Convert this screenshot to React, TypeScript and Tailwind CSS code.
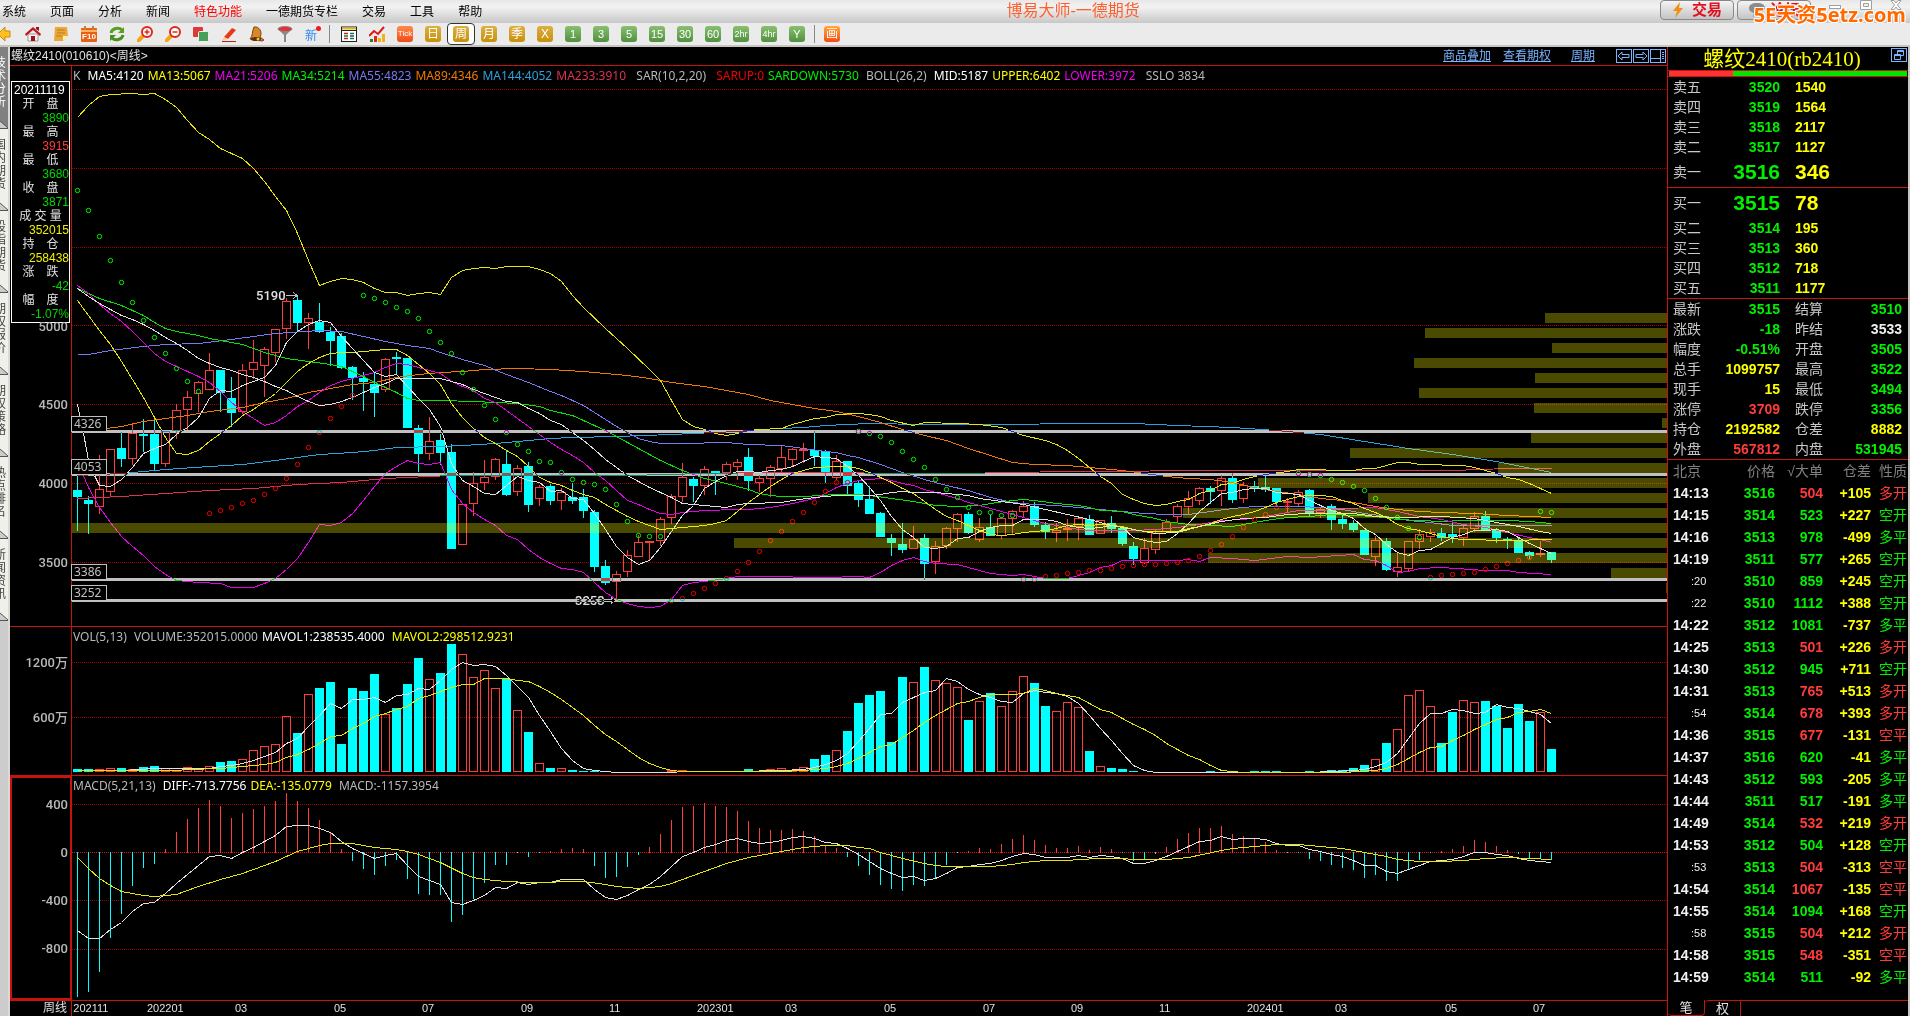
import type { ReactNode } from 'react';

type Candle = [high: number, top: number, bottom: number, low: number, up: 0 | 1];

// Weekly candles, in chart units
const candles: Candle[] = [
  [473, 490, 497, 531, 0], [496, 500, 504, 534, 0], [455, 489, 507, 514, 1], [449, 449, 492, 497, 1], [432, 448, 459, 467, 0],
  [424, 433, 459, 465, 1], [419, 434, 436, 452, 0], [418, 434, 464, 470, 0], [431, 431, 464, 467, 1], [404, 410, 431, 439, 1],
  [391, 397, 410, 430, 1], [381, 382, 394, 412, 1], [353, 370, 390, 390, 1], [370, 370, 393, 412, 0], [377, 398, 413, 427, 0],
  [364, 370, 412, 414, 1], [340, 362, 370, 379, 1], [347, 349, 366, 397, 1], [329, 329, 353, 362, 1], [298, 301, 329, 339, 1],
  [295, 300, 323, 331, 0], [313, 318, 323, 349, 1], [303, 322, 332, 333, 0], [327, 332, 341, 366, 0], [333, 336, 368, 369, 0],
  [366, 367, 378, 400, 0], [372, 378, 382, 411, 0], [372, 384, 393, 417, 0], [358, 359, 390, 392, 1], [352, 357, 359, 374, 0],
  [358, 358, 428, 428, 0], [425, 428, 454, 472, 0], [417, 441, 454, 460, 1], [434, 440, 453, 465, 0], [444, 452, 549, 549, 0],
  [504, 504, 545, 545, 1], [472, 483, 504, 516, 1], [460, 477, 483, 490, 1], [458, 459, 477, 480, 1], [450, 464, 495, 496, 0],
  [465, 468, 492, 496, 1], [462, 466, 505, 512, 0], [485, 487, 499, 506, 1], [484, 486, 501, 505, 0], [488, 492, 501, 510, 1],
  [483, 497, 501, 504, 0], [489, 497, 511, 518, 0], [510, 512, 567, 572, 0], [560, 566, 583, 585, 0], [571, 574, 582, 600, 1],
  [550, 555, 572, 577, 1], [535, 542, 557, 557, 1], [541, 541, 543, 560, 1], [517, 519, 541, 546, 1], [494, 496, 518, 524, 1],
  [463, 477, 497, 502, 1], [477, 479, 486, 502, 0], [466, 469, 486, 495, 1], [471, 471, 474, 495, 0], [462, 464, 473, 480, 1],
  [459, 462, 467, 480, 1], [448, 457, 481, 491, 0], [475, 478, 483, 492, 1], [465, 467, 479, 497, 1], [445, 457, 469, 473, 1],
  [448, 449, 460, 466, 1], [443, 449, 451, 463, 1], [431, 450, 456, 466, 0], [450, 451, 473, 483, 0], [455, 461, 478, 480, 1],
  [461, 461, 486, 495, 0], [480, 483, 500, 507, 0], [486, 499, 514, 514, 0], [512, 513, 537, 537, 0], [534, 538, 543, 556, 0],
  [523, 544, 550, 553, 0], [526, 539, 549, 549, 1], [534, 538, 564, 580, 0], [541, 546, 562, 574, 1], [527, 528, 546, 549, 1],
  [513, 514, 529, 542, 1], [512, 514, 533, 534, 0], [518, 527, 540, 542, 1], [515, 527, 536, 536, 0], [517, 518, 536, 539, 1],
  [510, 511, 519, 534, 1], [501, 506, 512, 517, 1], [502, 506, 525, 527, 0], [522, 525, 532, 539, 0], [523, 530, 533, 542, 1],
  [519, 528, 530, 541, 1], [517, 518, 527, 540, 1], [515, 519, 535, 535, 0], [520, 520, 534, 534, 1], [516, 523, 529, 533, 0],
  [528, 528, 544, 546, 0], [542, 546, 559, 565, 0], [538, 548, 563, 564, 1], [530, 533, 550, 554, 1], [519, 522, 532, 532, 1],
  [504, 506, 517, 522, 1], [491, 498, 507, 515, 1], [487, 488, 501, 505, 1], [486, 488, 492, 504, 0], [475, 478, 491, 506, 1],
  [473, 478, 500, 503, 0], [482, 485, 499, 503, 1], [481, 486, 488, 492, 0], [476, 487, 490, 492, 0], [488, 488, 502, 507, 0],
  [498, 501, 502, 513, 1], [490, 492, 504, 507, 1], [489, 490, 513, 517, 0], [508, 509, 513, 518, 1], [504, 506, 520, 530, 0],
  [515, 519, 524, 529, 0], [520, 523, 530, 532, 0], [530, 530, 555, 555, 0], [536, 540, 557, 566, 1], [538, 541, 570, 571, 0],
  [553, 567, 572, 577, 1], [541, 541, 569, 572, 1], [529, 534, 542, 549, 1], [529, 532, 537, 542, 1], [528, 533, 538, 541, 0],
  [522, 534, 537, 543, 0], [526, 528, 538, 546, 1], [512, 516, 529, 532, 1], [511, 516, 530, 530, 0], [528, 530, 538, 543, 0],
  [537, 539, 540, 549, 0], [537, 541, 553, 553, 0], [551, 552, 556, 559, 0], [541, 553, 555, 557, 1], [552, 552, 560, 563, 0],
];

const volumeTops = [
  769, 769, 769, 768, 768, 769, 767, 766, 768, 770, 767, 769, 766, 762, 761, 759, 750, 746, 744, 716, 733, 694, 688, 682, 744,
  688, 691, 674, 714, 708, 684, 658, 679, 673, 644, 654, 677, 670, 688, 679, 710, 732, 763, 768, 768, 770, 771, 771, 771, 771,
  771, 771, 771, 771, 770, 770, 771, 771, 771, 771, 771, 769, 771, 769, 768, 770, 767, 759, 755, 750, 731, 703, 695, 691, 742,
  677, 682, 667, 680, 683, 687, 720, 701, 693, 706, 691, 676, 683, 706, 711, 702, 707, 751, 766, 768, 769, 771, 771, 771, 771,
  771, 771, 771, 771, 771, 771, 771, 771, 771, 771, 771, 771, 771, 771, 770, 770, 768, 765, 759, 743, 729, 695, 690, 706, 743,
  712, 700, 702, 701, 706, 728, 704, 721, 712, 749,
];

const macdEnds = [
  997, 992, 972, 938, 914, 886, 868, 864, 849, 832, 819, 808, 800, 806, 818, 813, 809, 806, 801, 793, 801, 808, 820, 832, 849,
  861, 869, 875, 866, 860, 879, 894, 895, 895, 922, 915, 899, 883, 865, 865, 853, 857, 853, 851, 849, 848, 849, 866, 878, 877,
  867, 855, 847, 834, 820, 807, 806, 803, 806, 807, 811, 821, 828, 830, 830, 829, 831, 836, 846, 848, 857, 866, 875, 885, 889,
  891, 885, 886, 878, 865, 853, 851, 848, 849, 844, 839, 835, 840, 845, 848, 848, 846, 850, 847, 849, 853, 861, 859, 854, 847,
  839, 833, 828, 828, 826, 834, 836, 839, 842, 850, 853, 853, 859, 861, 865, 868, 870, 878, 875, 881, 881, 870, 860, 853, 851,
  849, 846, 840, 842, 846, 850, 854, 858, 858, 860,
];

// Series are written as "bar:y" pairs
const priceLines = [
  { color: '#dc3250', d: '0:498 4:496 8:493 12:490 16:488 20:484 24:482 28:478 32:476 34:475 50:475 57:473 63:472 80:473 90:471 105:470 125:470 130:468 134:468' },
  { color: '#2da0dc', d: '0:475 4:473 8:469 12:466 15:464 18:460 20:457 22:454 25:452 27:450 29:447 33:446 35:445 38:443 40:441 43:438 45:437 49:436 54:434 58:432 60:431 62:429 66:427 68:425 72:423 77:424 85:424 90:423 96:423 100:425 105:427 109:430 113:434 117:441 121:448 125:454 129:461 134:472' },
  { color: '#f07800', d: '0:431 2:429 4:426 6:421 8:418 10:415 12:411 15:407 17:402 19:398 21:392 23:388 25:384 27:382 29:377 31:374 33:372 35:371 37:369 40:368 43:369 46:371 50:375 52:378 54:382 57:386 59:390 61:394 63:400 65:404 67:408 69:411 71:416 73:422 75:429 77:435 79:440 81:448 83:455 85:462 87:464 90:465 93:468 95:470 97:473 99:476 101:478 103:479 105:482 107:487 109:491 111:494 113:498 115:500 118:506 120:509 122:511 124:512 127:513 130:515 134:517' },
  { color: '#7878f0', d: '0:354 1:354 3:350 6:346 8:344 11:343 14:339 18:333 22:330 24:331 26:336 28:341 30:345 32:348 33:352 35:359 37:365 39:374 41:382 43:391 44:395 45:400 46:405 47:412 48:419 49:426 50:432 51:438 52:441 53:443 55:443 59:442 61:444 64:445 66:448 68:451 69:452 70:455 71:457 73:464 75:472 77:479 79:485 81:490 83:497 85:502 87:504 89:505 91:507 93:509 95:511 97:513 99:514 101:514 103:511 105:508 107:506 109:506 111:506 113:507 115:509 117:513 119:516 121:520 123:522 125:525 134:525' },
  { color: '#00e600', d: '0:288 1:293 2:298 4:305 6:315 7:322 8:328 9:331 11:335 12:338 15:344 17:352 19:358 21:361 23:364 24:366 25:371 26:376 27:382 28:387 29:392 30:398 31:400 33:400 36:401 38:402 40:403 42:406 43:410 45:415 46:420 48:430 50:442 52:454 53:460 55:470 57:478 59:483 60:486 61:489 62:493 63:495 64:496 66:496 69:494 71:494 72:495 74:498 76:501 78:505 80:506 82:505 83:503 85:500 86:499 87:500 89:503 91:505 92:507 93:510 95:511 96:514 98:518 99:521 101:524 103:525 105:526 106:524 108:520 110:517 112:516 114:514 116:515 118:516 120:519 122:520 124:521 126:520 130:520 132:521 134:523' },
  { color: '#e600e6', d: '0:285 1:293 2:304 3:313 4:321 5:331 6:342 7:353 8:361 9:366 10:371 11:376 12:382 13:391 14:402 15:411 16:418 17:425 18:422 19:415 20:406 21:400 22:392 23:385 24:381 25:378 26:375 27:372 28:367 29:363 30:364 31:367 32:370 33:373 34:381 35:386 36:390 37:398 38:402 39:410 40:418 41:426 42:434 43:442 44:449 45:455 46:462 47:472 48:480 49:490 50:500 51:504 52:509 53:513 54:514 55:512 56:511 57:510 60:509 61:509 62:508 63:507 65:503 67:498 68:493 69:487 70:483 71:480 72:479 73:478 74:480 75:483 76:485 77:489 78:492 79:495 80:498 81:502 82:505 83:508 84:511 85:514 86:517 87:520 88:523 89:525 90:527 91:529 92:530 96:530 98:529 100:527 102:524 104:520 106:519 108:516 110:512 111:510 113:510 115:508 118:507 119:509 120:511 122:516 124:519 126:524 128:527 130:532 132:537 133:539 134:542' },
  { color: '#e6e600', d: '0:300 1:315 2:330 3:344 4:361 5:379 6:397 7:417 8:437 9:453 10:454 11:450 12:441 13:433 14:425 15:415 16:409 17:401 18:393 19:382 20:371 21:363 22:357 23:353 24:352 25:352 26:351 27:350 28:349 29:349 30:355 31:364 32:373 33:384 34:403 35:417 36:428 37:437 38:443 39:450 40:456 41:466 42:477 43:482 44:485 45:490 46:494 47:497 48:504 49:510 50:516 51:521 52:525 53:529 54:528 55:527 56:526 57:525 58:523 59:520 60:511 61:502 62:494 63:486 64:479 65:473 66:470 67:467 69:466 70:466 71:468 72:472 73:477 74:482 75:488 76:493 77:501 78:509 79:516 80:520 81:525 82:530 83:534 84:535 85:534 86:532 87:531 88:530 89:528 90:525 91:524 92:525 93:524 94:525 95:526 96:529 97:531 100:531 101:528 102:526 103:523 104:519 105:516 106:514 107:511 108:507 109:502 110:499 111:496 112:495 113:495 114:496 115:500 116:503 117:508 118:512 119:517 120:524 121:528 122:530 123:533 124:536 125:538 126:539 127:539 129:540 131:540 133:539 134:539' },
  { color: '#e0e0e0', d: '0:404 0.5:430 1:460 1.5:474 2:485 3:486 4:479 5:467 6:453 7:448 8:444 9:434 10:427 11:417 12:398 13:390 14:391 15:385 16:381 17:377 18:365 19:342 20:331 21:324 22:320 23:322 24:336 25:348 26:360 27:372 28:376 29:374 30:386 31:398 32:409 33:426 34:463 35:480 36:486 37:493 38:494 39:485 40:476 41:480 42:482 43:491 44:490 45:498 46:499 47:513 48:529 49:546 50:557 51:564 52:560 53:547 54:531 55:515 56:505 57:488 58:481 59:475 60:471 61:471 62:472 63:470 64:469 65:466 66:461 67:456 68:457 69:458 70:466 71:475 72:487 73:500 74:516 75:529 76:537 77:547 78:548 79:546 80:538 81:537 82:531 83:527 84:525 85:525 86:519 87:519 88:519 89:521 90:525 91:527 92:528 93:527 94:525 95:527 96:537 97:540 98:542 99:541 100:533 101:523 102:511 103:502 104:493 105:492 106:489 107:488 108:488 109:492 110:493 111:494 112:500 113:505 114:510 115:513 116:518 117:528 118:534 119:544 120:552 121:555 122:550 123:549 124:543 125:537 126:534 127:530 128:530 129:529 130:531 131:537 132:543 133:548 134:553' },
  { color: '#e0e0e0', d: '0:288 1:296 2:303 3:309 4:315 5:319 6:324 7:330 8:337 9:343 10:350 11:358 12:363 13:367 14:370 15:374 16:377 17:381 18:386 19:390 20:396 21:401 22:405 23:404 24:401 25:397 26:392 27:387 28:383 29:378 33:378 34:381 35:384 36:389 37:393 38:397 39:401 40:402 41:408 42:413 43:420 44:424 45:432 46:440 47:449 48:459 49:467 50:475 51:481 52:487 53:492 54:497 55:503 56:504 57:505 59:507 60:504 61:503 64:502 65:500 67:497 68:496 69:495 72:495 73:494 74:492 75:491 76:492 78:492 80:494 81:495 82:498 84:501 86:504 88:509 90:514 92:519 93:522 94:525 95:527 97:531 98:533 100:532 102:526 104:521 106:518 108:517 110:514 112:513 116:513 118:516 120:517 124:516 127:518 129:522 131:526 133:531 134:533' },
  { color: '#e6e600', d: '0:117 1:105 2:96 3:94 5:93 6:94 7:93 8:99 9:107 10:120 11:132 12:139 13:148 14:153 15:158 16:168 17:181 18:196 19:210 20:233 21:260 22:285 23:281 24:278 25:279 26:282 27:288 28:292 29:292 30:295 31:293 32:292 33:294 34:277 35:270 36:268 37:267 38:268 39:266 41:266 42:269 43:273 44:281 45:295 46:307 48:328 50:348 52:369 53:380 54:400 55:419 56:426 57:429 58:433 59:435 60:433 61:430 62:429 64:428 65:424 67:418 68:417 69:414 71:413 72:414 73:416 74:420 76:425 77:422 80:423 82:424 84:427 86:435 88:440 89:444 90:450 91:458 92:467 93:476 94:483 95:494 96:499 97:503 98:505 99:504 100:501 101:499 102:493 103:490 104:484 105:483 106:479 107:476 108:474 110:471 111:469 116:470 117:468 118:468 119:465 120:462 121:462 122:464 126:465 127:467 128:470 129:473 130:477 131:479 132:483 133:488 134:493' },
  { color: '#e600e6', d: '0.5:474 1:487 2:507 3:522 4:536 5:546 6:555 7:566 8:574 9:580 10:581 11:582 13:583 14:587 16:587 17:583 18:578 19:569 20:558 21:542 22:524 23:525 24:522 25:513 26:500 27:486 28:473 29:466 30:460 31:463 32:464 33:462 34:489 35:503 36:512 37:519 38:525 39:535 40:539 41:549 42:557 43:563 44:568 45:569 46:572 47:582 48:592 49:599 50:603 51:606 52:607 53:606 54:599 55:585 56:582 57:581 59:578 60:576 64:576 66:577 68:577 71:576 72:577 73:572 74:565 75:560 76:557 77:561 78:563 80:564 81:567 83:573 85:575 86:574 88:578 90:578 91:575 92:572 93:567 94:565 95:560 100:560 101:559 102:561 103:557 105:558 107:560 110:556 112:557 116:554 117:559 118:560 119:565 120:572 121:571 122:568 124:567 128:570 130:570 131:572 134:574' },
];

const sarDown = '0:190 1:210 2:236 3:260 4:282 5:302 6:320 7:337 8:353 9:368 10:381 11:391 26:295 27:298 28:302 29:307 30:311 31:318 32:331 33:342 34:353 35:372 36:389 37:405 38:419 39:432 40:444 41:451 42:461 43:462 44:472 45:479 46:482 47:484 48:489 49:504 50:521 51:535 52:536 53:536 71:431 72:433 73:436 74:442 75:451 76:459 77:467 78:479 79:489 80:497 81:507 82:512 83:512 84:515 85:515 111:473 112:474 113:475 114:479 115:482 116:486 117:490 118:498 119:507 120:517 121:528 122:537 133:511 134:512';
const sarUp = '12:513 13:510 14:507 15:503 16:500 17:494 18:488 19:478 20:464 21:447 22:432 23:418 24:406 25:395 54:600 55:598 56:593 57:588 58:583 59:578 60:571 61:562 62:551 63:540 64:531 65:521 66:512 67:502 68:491 69:482 70:482 86:579 87:579 88:576 89:575 90:573 91:572 92:570 93:570 94:568 95:566 96:565 97:564 98:564 99:563 100:562 101:560 102:556 103:550 104:544 105:536 106:527 107:519 108:514 109:507 110:506 123:577 124:575 125:574 126:573 127:572 128:569 129:566 130:563 131:560 132:557';

const mavol1 = '0:770 4:770 7:768 12:768 13:766 14:765 15:763 16:760 17:756 18:752 19:743 20:738 21:726 22:715 23:703 24:708 25:699 26:699 27:697 28:702 29:695 30:694 31:688 32:689 33:680 34:669 35:662 36:665 37:664 38:666 39:675 40:686 41:697 42:715 43:731 44:748 45:760 46:768 47:770 49:772 60:771 64:770 66:769 67:767 68:764 69:760 70:753 71:741 72:728 73:714 74:713 75:702 76:697 77:692 78:690 79:678 80:681 81:689 82:694 83:697 84:701 85:702 86:693 87:690 88:692 89:693 90:696 91:703 92:715 93:728 94:740 95:753 96:765 97:770 98:772 112:772 114:771 116:770 117:769 118:766 119:762 120:753 121:738 122:723 123:713 124:713 125:709 126:710 127:713 128:712 129:704 130:707 131:708 132:711 133:714 134:723';
const mavol2 = '0:770 8:770 11:769 12:768 13:768 14:767 15:766 16:765 17:764 18:762 19:757 20:754 21:749 22:743 23:736 24:735 25:728 26:723 27:716 28:713 29:709 30:706 31:698 32:695 33:691 34:687 35:684 36:684 37:678 39:678 40:680 41:681 42:686 43:692 44:699 45:707 46:715 47:725 48:734 49:741 50:749 51:757 52:763 53:767 54:770 55:771 64:771 66:770 67:769 68:768 69:766 70:763 71:758 72:752 73:746 74:744 75:737 76:730 77:722 78:715 79:709 80:703 81:701 82:697 83:694 85:694 86:693 87:688 88:690 89:693 90:695 91:697 92:703 93:709 94:712 95:718 96:724 97:729 98:735 99:743 100:749 101:755 102:759 103:765 104:770 106:772 115:772 118:770 119:768 120:764 121:758 122:752 123:747 124:746 125:740 126:735 127:729 128:724 129:719 130:717 131:712 132:711 133:709 134:713';
const diff = '0:930 1:938 2:938 3:929 4:922 5:911 6:903 7:902 8:893 9:883 10:874 11:865 12:856 13:855 14:858 15:852 16:847 17:841 18:835 19:826 20:825 21:825 22:828 23:832 24:841 25:848 26:853 27:858 28:855 29:853 30:865 31:876 32:880 33:884 34:902 35:904 36:900 37:895 38:887 39:888 40:882 41:884 42:882 43:882 44:879 46:879 47:889 48:897 49:899 50:895 51:889 52:884 53:876 54:866 55:856 56:852 57:847 58:844 59:840 60:838 61:841 62:843 63:842 64:840 65:837 66:836 67:838 68:842 69:843 70:848 71:854 72:861 73:868 74:873 75:877 76:876 77:880 78:878 79:873 80:867 81:866 82:864 83:863 84:860 85:856 86:853 87:854 88:857 90:857 91:855 92:857 93:855 94:856 95:858 96:863 97:863 98:860 99:856 100:851 101:846 102:841 103:840 104:836 105:839 106:838 107:838 108:839 109:843 110:845 111:845 112:849 113:851 114:854 115:856 116:860 117:865 118:865 119:871 120:873 121:869 122:865 123:861 124:860 125:859 126:856 127:852 128:852 129:854 130:855 131:858 132:860 133:861 134:862';
const dea = '0:857 1:868 2:878 3:885 4:891 5:893 6:895 7:896 8:895 9:894 10:890 11:886 13:879 15:873 18:861 20:851 22:845 23:843 25:843 27:847 29:849 30:851 31:854 33:862 35:873 36:877 37:879 39:881 41:882 43:882 44:881 46:881 48:884 49:886 51:888 52:887 53:886 54:883 56:875 58:867 59:863 61:857 63:853 65:849 66:847 68:845 70:845 71:847 72:848 73:852 75:858 77:863 78:865 79:866 83:866 85:864 86:862 88:860 90:860 91:859 93:858 95:858 96:859 99:859 101:857 104:850 105:848 107:846 109:844 111:844 113:846 115:848 116:850 118:854 119:856 120:859 122:861 124:861 126:860 128:858 130:857 132:858 134:859';

// Volume profile: left edge of each price bucket
const profile = [1545, 1425, 1552, 1414, 1535, 1419, 1534, 1662, 1531, 1350, 1498, 1258, 1368, 1183, 72, 734, 1208, 1611, 1666];

const levels = [
  { price: 4326, y: 431 },
  { price: 4053, y: 474 },
  { price: 3386, y: 579 },
  { price: 3252, y: 600 },
];

const LEFT = 72;
const WIDTH = 1595;
const barX = (i: number) => 77 + 11 * i;
const parse = (s: string) => s.split(' ').map(p => p.split(':').map(Number));
const toPoints = (s: string) => parse(s).map(([i, y]) => `${barX(i) + 0.5},${y + 0.5}`).join(' ');

function Line({ d, color }: { d: string; color: string }) {
  return <polyline points={toPoints(d)} fill="none" stroke={color} strokeWidth={1} />;
}

function Dots({ d, color }: { d: string; color: string }) {
  return (
    <g fill="none" stroke={color} shapeRendering="auto">
      {parse(d).map(([i, y]) => (
        <circle key={i} cx={barX(i) + 0.5} cy={y + 0.5} r={2.2} />
      ))}
    </g>
  );
}

function GridLines({ ys }: { ys: number[] }) {
  return (
    <g stroke="#a00000" strokeDasharray="1 1">
      {ys.map(y => (
        <line key={y} x1={LEFT} x2={LEFT + WIDTH} y1={y + 0.5} y2={y + 0.5} />
      ))}
    </g>
  );
}

interface PanelProps {
  top: number;
  height: number;
  ticks: { label: string; y: number }[];
  legend: [text: string, color: string][];
  grid: number[];
  selected?: boolean;
  axisExtra?: ReactNode;
  overlay?: ReactNode;
  children: ReactNode;
}

function Panel({ top, height, ticks, legend, grid, selected, axisExtra, overlay, children }: PanelProps) {
  return (
    <section className="grid min-h-0 grid-cols-[62px_1fr] border-b border-[#c4140c]">
      <div className={`relative ${selected ? 'border-2 border-[#c4140c]' : 'border-r border-[#c4140c]'}`}>
        {axisExtra}
        {ticks.map(t => (
          <span
            key={t.label}
            className={`absolute -translate-y-1/2 font-['Roboto','Noto_Sans_CJK_SC',sans-serif] text-[13px] leading-3 font-medium text-[#b8b8b8] ${selected ? 'right-[2px]' : 'right-[3px]'}`}
            style={{ top: `${((t.y - top) / height) * 100}%` }}
          >
            {t.label}
          </span>
        ))}
      </div>
      <div className="relative min-h-0">
        <svg
          className="absolute inset-0 size-full"
          viewBox={`${LEFT} ${top} ${WIDTH} ${height}`}
          preserveAspectRatio="none"
          shapeRendering="crispEdges"
        >
          <GridLines ys={grid} />
          {children}
        </svg>
        {overlay}
        <p className="relative flex gap-1 pt-[2px] pl-px font-['Noto_Sans',sans-serif] text-[12px] leading-4 whitespace-pre">
          {legend.map(([text, color]) => (
            <span key={text} style={{ color }}>{text}</span>
          ))}
        </p>
      </div>
    </section>
  );
}

const quoteInfo = [
  ['开　盘', '3890', 'text-[#00d800]'],
  ['最　高', '3915', 'text-[#ff3c3c]'],
  ['最　低', '3680', 'text-[#00d800]'],
  ['收　盘', '3871', 'text-[#00d800]'],
  ['成 交 量', '352015', 'text-[#f0f000]'],
  ['持　仓', '258438', 'text-[#f0f000]'],
  ['涨　跌', '-42', 'text-[#00d800]'],
  ['幅　度', '-1.07%', 'text-[#00d800]'],
];

function CursorInfo() {
  return (
    <dl className="absolute top-[15px] right-px left-px border border-white bg-black pb-px text-[12px] leading-[14px]">
      <dt className="pt-px pl-[2px] text-white">20211119</dt>
      {quoteInfo.map(([label, value, color]) => (
        <div key={label}>
          <dd className="text-center text-[#e0e0e0]">{label}</dd>
          <dd className={`text-right ${color}`}>{value}</dd>
        </div>
      ))}
    </dl>
  );
}

function PricePanel() {
  return (
    <Panel
      top={66}
      height={560}
      grid={[89, 168, 247, 325, 404, 483, 562]}
      ticks={[
        { label: '5000', y: 327 },
        { label: '4500', y: 405 },
        { label: '4000', y: 484 },
        { label: '3500', y: 563 },
      ]}
      legend={[
        ['K ', '#b8b8b8'], ['MA5:4120', '#ffffff'], ['MA13:5067', '#ffff00'], ['MA21:5206', '#f000f0'], ['MA34:5214', '#00f000'],
        ['MA55:4823', '#7878f0'], ['MA89:4346', '#f07800'], ['MA144:4052', '#2da0dc'], ['MA233:3910', '#dc3250'],
        ['  SAR(10,2,20)  ', '#b8b8b8'], ['SARUP:0', '#f00000'], ['SARDOWN:5730', '#00f000'], [' BOLL(26,2) ', '#b8b8b8'],
        ['MID:5187', '#ffffff'], ['UPPER:6402', '#ffff00'], ['LOWER:3972', '#f000f0'], ['  SSLO 3834', '#b8b8b8'],
      ]}
      axisExtra={<CursorInfo />}
      overlay={levels.map(l => (
        <span
          key={l.price}
          className="absolute -left-px w-9 -translate-y-full border border-[#c0c0c0] bg-black pl-[2px] font-['Noto_Sans',sans-serif] text-[12px] leading-[14px] text-[#c0c0c0]"
          style={{ top: `${((l.y - 65) / 560) * 100}%` }}
        >
          {l.price}
        </span>
      ))}
    >
      {candles.map(([high, top, bottom, low, up], i) => {
        const x = barX(i);
        return up ? (
          <g key={i} stroke="#ff3c3c" fill="none">
            <path d={`M${x + 0.5} ${high}V${top}M${x + 0.5} ${bottom}V${low}`} />
            <rect x={x - 3.5} y={top + 0.5} width={8} height={Math.max(bottom - top - 1, 1)} />
          </g>
        ) : (
          <g key={i} fill="#00ffff">
            <rect x={x} y={high} width={1} height={low - high} />
            <rect x={x - 4} y={top} width={9} height={bottom - top} />
          </g>
        );
      })}
      {priceLines.map((l, i) => <Line key={i} {...l} />)}
      <Dots d={sarDown} color="#00f000" />
      <Dots d={sarUp} color="#f00000" />
      <g stroke="#c0c0c0" fill="none">
        <path d="M286 295.5H297M293.5 292.5L297 295.5L293.5 298.5M604 600.5H614M611 597.5L614 600.5L611 603.5" />
      </g>
      <g fill="#e0e0e0" fontFamily="Roboto, sans-serif" fontSize="13" fontWeight="500">
        <text x="256" y="300">5190</text>
        <text x="575" y="605">3253</text>
      </g>
      <g fill="#ffff00" opacity={0.29}>
        {profile.map((x, i) => (
          <rect key={i} x={x} y={313 + i * 15} width={LEFT + WIDTH - x} height={10} />
        ))}
      </g>
      <g fill="#c0c0c0" className="mix-blend-difference">
        {levels.map(l => (
          <rect key={l.price} x={LEFT} y={l.y - 1} width={WIDTH} height={3} />
        ))}
      </g>
    </Panel>
  );
}

function VolumePanel() {
  return (
    <Panel
      top={627}
      height={148}
      grid={[662, 717]}
      ticks={[
        { label: '1200万', y: 663 },
        { label: '600万', y: 718 },
      ]}
      legend={[
        ['VOL(5,13) ', '#b8b8b8'], ['VOLUME:352015.0000', '#b8b8b8'], ['MAVOL1:238535.4000 ', '#ffffff'], ['MAVOL2:298512.9231', '#ffff00'],
      ]}
    >
      {volumeTops.map((y, i) => {
        const x = barX(i);
        return candles[i][4] ? (
          <rect key={i} x={x - 3.5} y={y + 0.5} width={8} height={771 - y} fill="none" stroke="#ff3c3c" />
        ) : (
          <rect key={i} x={x - 4} y={y} width={9} height={772 - y} fill="#00ffff" />
        );
      })}
      <Line d={mavol1} color="#e0e0e0" />
      <Line d={mavol2} color="#e6e600" />
    </Panel>
  );
}

function MacdPanel() {
  return (
    <Panel
      top={776}
      height={224}
      grid={[804, 852, 900, 949]}
      selected
      ticks={[
        { label: '400', y: 803 },
        { label: '0', y: 852 },
        { label: '-400', y: 901 },
        { label: '-800', y: 950 },
      ]}
      legend={[
        ['MACD(5,21,13) ', '#b8b8b8'], ['DIFF:-713.7756', '#ffffff'], ['DEA:-135.0779 ', '#ffff00'], ['MACD:-1157.3954', '#b8b8b8'],
      ]}
    >
      <line x1={LEFT} x2={LEFT + WIDTH} y1={852.5} y2={852.5} stroke="#e01010" strokeDasharray="1 1" />
      {macdEnds.map((y, i) => (
        <path key={i} d={`M${barX(i) + 0.5} ${y < 852 ? 853 : 852}V${y}`} stroke={y < 852 ? '#ff3c3c' : '#00ffff'} />
      ))}
      <Line d={diff} color="#e0e0e0" />
      <Line d={dea} color="#e6e600" />
    </Panel>
  );
}

const months: [number, string][] = [
  [0.3, '202111'], [7, '202201'], [15, '03'], [24, '05'], [32, '07'], [41, '09'], [49, '11'], [57, '202301'], [65, '03'],
  [74, '05'], [83, '07'], [91, '09'], [99, '11'], [107, '202401'], [115, '03'], [125, '05'], [133, '07'],
];

function TimeAxis() {
  return (
    <div className="grid grid-cols-[62px_1fr] text-[11px] leading-[15px] text-[#e0e0e0]">
      <span className="border-r border-[#c4140c] pr-1 text-right text-[12px]">周线</span>
      <div className="relative">
        {months.map(([i, label]) => (
          <span key={i} className="absolute" style={{ left: `${((i * 11 - 2) / WIDTH) * 100}%` }}>{label}</span>
        ))}
      </div>
    </div>
  );
}

const menus = ['系统', '页面', '分析', '新闻', '特色功能', '一德期货专栏', '交易', '工具', '帮助'];

function MenuBar() {
  return (
    <header className="relative flex h-[23px] bg-linear-to-b from-[#e8e8e8] via-[#f2f2f2] via-30% to-[#c8c8c8]">
      <nav className="flex gap-6 pl-[2px]">
        {menus.map(m => (
          <button key={m} type="button" className={`text-[12px] whitespace-nowrap ${m === '特色功能' ? 'text-[#ff0000]' : 'text-black'}`}>
            {m}
          </button>
        ))}
      </nav>
      <h1 className="flex-1 pl-1 text-center text-[16px] leading-[22px] text-[#ff6030]">博易大师-一德期货</h1>
      <div className="flex h-5 gap-[3px] text-[15px] leading-5 font-bold text-[#e01020]">
        <button type="button" className="flex w-[74px] items-center justify-center gap-2 rounded border border-[#888] bg-linear-to-b from-[#f4f4f4] to-[#c4c4c4]">
          <svg width="12" height="16" viewBox="0 0 12 16"><path d="M8 0L1 9h4L3 16l8-10H7z" fill="#f09010" /></svg>
          交易
        </button>
        <button type="button" className="flex w-[74px] items-center justify-center gap-1 rounded border border-[#888] bg-linear-to-b from-[#f4f4f4] to-[#c4c4c4]">
          <svg width="18" height="16" viewBox="0 0 18 16"><path d="M9 1c5 0 8 2 8 5s-3 6-7 6l-5 3 1-4C3 10 1 9 1 6s3-5 8-5z" fill="#8c8c8c" /></svg>
          论坛
        </button>
      </div>
      <div className="flex w-[99px] items-start justify-around pl-2 text-[#a0a0a0]">
        <button type="button" aria-label="最小化"><svg width="14" height="10" viewBox="0 0 14 10"><rect x="1.5" y="5.5" width="11" height="3" fill="#fff" stroke="currentColor" /></svg></button>
        <button type="button" aria-label="最大化"><svg width="14" height="10" viewBox="0 0 14 10"><path d="M1.5 .5h11v9h-11zM4.500 3.500h5v3h-5z" fill="#fff" stroke="currentColor" fillRule="evenodd" /></svg></button>
        <button type="button" aria-label="关闭"><svg width="12" height="10" viewBox="0 0 12 10"><path d="M1 .5h3l2 2.500 2-2.500h3L7.500 5 11 9.500H8L6 7 4 9.500H1L4.500 5z" fill="#fff" stroke="currentColor" /></svg></button>
      </div>
      <span className="absolute top-0 right-1 font-['Open_Sans','Noto_Sans_CJK_SC',sans-serif] text-[20px] leading-[30px] font-bold text-[#ff6a00] [text-shadow:1px_1px_0_#fff,-1px_-1px_0_#fff,1px_-1px_0_#fff,-1px_1px_0_#fff]">
        5E天资5etz.com
      </span>
    </header>
  );
}

const drawIcons: { name: string; art: ReactNode }[] = [
  { name: '后退', art: <path d="M13 5H8V1L1 8l7 7v-4h5z" fill="#ffc020" stroke="#c88a10" /> },
  { name: '首页', art: <><path d="M3 8h10v7H3z" fill="#f4f4f4" stroke="#999" /><path d="M0 8L8 1l8 7-1 2-7-6-7 6z" fill="#c01818" /><path d="M11 1h3v4l-3-2zM6 10h4v5H6z" fill="#a01010" /></> },
  { name: '记事', art: <><path d="M2 1h12l1 9-5 5H1z" fill="#eaa838" /><path d="M4 4h8M4 7h8M3 10h6" stroke="#b87818" /><path d="M10 15v-5h5z" fill="#fff0c0" /></> },
  { name: 'F10', art: <><rect x="0" y="2" width="16" height="14" rx="1" fill="#e86010" /><path d="M0 5h16" stroke="#ffb060" strokeWidth="2" /><path d="M4 0v4M12 0v4" stroke="#c08040" strokeWidth="2" /><text x="8" y="13" fontSize="8" fontWeight="700" textAnchor="middle" fill="#fff">F10</text></> },
  { name: '刷新', art: <><path d="M2 7c1-5 8-6 11-3" fill="none" stroke="#58a020" strokeWidth="3" /><path d="M15 1v6H9z" fill="#58a020" /><path d="M14 9c-1 5-8 6-11 3" fill="none" stroke="#48901c" strokeWidth="3" /><path d="M1 15V9h6z" fill="#48901c" /></> },
  { name: '放大', art: <><path d="M6 10L1 15" stroke="#f0a818" strokeWidth="4" strokeLinecap="round" /><circle cx="10" cy="6" r="5" fill="#fff" stroke="#e02818" strokeWidth="2" /><path d="M7.500 6h5M10 3.500v5" stroke="#e02818" strokeWidth="1.500" /></> },
  { name: '缩小', art: <><path d="M6 10L1 15" stroke="#f0a818" strokeWidth="4" strokeLinecap="round" /><circle cx="10" cy="6" r="5" fill="#fff" stroke="#e02818" strokeWidth="2" /><path d="M7.500 6h5" stroke="#e02818" strokeWidth="1.500" /></> },
  { name: '叠加', art: <><rect x="0" y="1" width="10" height="10" rx="1" fill="#e03838" /><rect x="5.5" y="5.5" width="10" height="10" rx="1" fill="#48a058" stroke="#eee" /></> },
  { name: '画线', art: <><path d="M3 11L11 2l4 2-8 9z" fill="#e83818" /><path d="M3 11l4 2-6 2z" fill="#f8c888" /><path d="M1 15.500h14" stroke="#c02010" strokeWidth="1" /></> },
  { name: '预警', art: <><path d="M5 1c5-1 9 5 6 10l4 3-2 1-12-2c3-3 2-8 4-12z" fill="#d88828" stroke="#804008" /><ellipse cx="7" cy="13" rx="5" ry="2" fill="#603010" /><circle cx="9" cy="13" r="1.500" fill="#f8c040" /></> },
  { name: '筛选', art: <><path d="M1 3l6 6v7h2V9l6-6z" fill="#888" /><ellipse cx="8" cy="3" rx="7" ry="2.500" fill="#e83030" stroke="#888" /></> },
  { name: '新', art: <><text x="6" y="14" fontSize="12" textAnchor="middle" fill="#3088f0">新</text><circle cx="13.500" cy="2.500" r="2.500" fill="#f01818" /></> },
];

const tableIcons: { name: string; art: ReactNode }[] = [
  { name: '报价', art: <><rect x=".5" y="1" width="15" height="14.500" fill="#fff" stroke="#222" /><path d="M1 2.500h14" stroke="#e8b820" strokeWidth="2" /><path d="M1 4.500h14" stroke="#222" /><path d="M3 7.500h4M3 12.500h4" stroke="#c02020" strokeWidth="1.500" /><path d="M9 7.500h4M3 10h4M9 12.500h4" stroke="#108030" strokeWidth="1.500" /><path d="M9 10h4" stroke="#2040a0" strokeWidth="1.500" /></> },
  { name: '走势', art: <><path d="M1 13h3v3H1z" fill="#208030" /><path d="M5 10h3v6H5z" fill="#e02818" /><path d="M9 12h3v4H9zM13 8h3v8h-3z" fill="#f0b020" /><path d="M0 10l5-5 4 3 6-7" fill="none" stroke="#e01818" strokeWidth="2" /></> },
];

const periods = [
  ['Tick', 'orange'], ['日', 'gold'], ['周', 'gold'], ['月', 'gold'], ['季', 'gold'], ['X', 'gold'],
  ['1', 'green'], ['3', 'green'], ['5', 'green'], ['15', 'green'], ['30', 'green'], ['60', 'green'],
  ['2hr', 'small'], ['4hr', 'small'], ['Y', 'green'],
];

const tileStyles: Record<string, string> = {
  orange: 'from-[#ff8848] to-[#f04818] text-[8px]',
  gold: 'from-[#dcb040] to-[#c89000] text-[12px]',
  green: 'from-[#88c070] to-[#509040] text-[11px]',
  small: 'from-[#88c070] to-[#509040] text-[9px]',
};

function IconButton({ name, children }: { name: string; children: ReactNode }) {
  return (
    <button type="button" title={name} className="flex w-7 items-center justify-center">
      <svg width="16" height="16" viewBox="0 0 16 16">{children}</svg>
    </button>
  );
}

function Toolbar() {
  return (
    <div className="flex h-6 items-stretch overflow-hidden border-b-2 border-[#c8c4c0] bg-[#ebebeb]">
      <div className="-ml-[9px] flex">
        {drawIcons.map(i => <IconButton key={i.name} name={i.name}>{i.art}</IconButton>)}
      </div>
      <span className="mr-[5px] ml-[2px] my-[2px] w-px bg-[#888]" />
      <div className="flex">
        {tableIcons.map(i => <IconButton key={i.name} name={i.name}>{i.art}</IconButton>)}
        {periods.map(([label, tone]) => (
          <button
            key={label}
            type="button"
            className={`flex w-7 items-center justify-center ${label === '周' ? 'rounded border border-[#333] bg-white' : ''}`}
          >
            <span className={`flex size-4 items-center justify-center rounded-[3px] bg-linear-to-b leading-none text-white ${tileStyles[tone]}`}>
              {label}
            </span>
          </button>
        ))}
      </div>
      <span className="mx-[3px] my-[2px] w-px bg-[#888]" />
      <button type="button" className="flex w-7 items-center justify-center">
        <span className="flex size-4 items-center justify-center rounded-[3px] bg-linear-to-b from-[#ffa838] to-[#f04818] text-[12px] leading-none text-white">画</span>
      </button>
    </div>
  );
}

const sideTabs = ['技术分析', '国内期货', '股指期货', '期权报价', '期权策略', '热点排名', '新闻资讯'];

function SideTabs() {
  return (
    <nav className="flex w-[10px] flex-col overflow-hidden border-r-2 border-[#dcd8d4] bg-[#cccccc]">
      {sideTabs.map((t, i) => (
        <button
          key={t}
          type="button"
          className={`relative flex h-[82px] w-2 shrink-0 items-start justify-center overflow-hidden border-b border-[#555] text-[12px] leading-[13px] ${i === 0 ? 'bg-[#808080] text-white' : 'bg-[#f0f0ea] text-[#444]'}`}
        >
          <span className="-ml-2 w-3 shrink-0 pt-[10px]">{t}</span>
          <svg className="absolute bottom-0 left-0" width="8" height="7" viewBox="0 0 8 7"><path d="M0 0l8 7H0z" fill="#ccc" /><path d="M0 0l8 7" stroke="#555" /></svg>
        </button>
      ))}
    </nav>
  );
}

function ChartHeader() {
  return (
    <div className="flex items-center border-b border-[#c4140c] pr-px text-[12px] text-[#7ab4ff]">
      <h2 className="flex-1 pl-px text-[#e0e0e0]">螺纹2410(010610)&lt;周线&gt;</h2>
      <a href="#overlay" className="mr-3 underline">商品叠加</a>
      <a href="#options" className="mr-5 underline">查看期权</a>
      <a href="#period" className="mr-[21px] underline">周期</a>
      <div className="flex gap-px">
        <button type="button" aria-label="上一个" className="border border-[#7ab4ff]">
          <svg width="14" height="12" viewBox="0 0 14 12"><path d="M1 6l4-4v2.500h7v3H5V10z" fill="none" stroke="currentColor" /></svg>
        </button>
        <button type="button" aria-label="下一个" className="border border-[#7ab4ff]">
          <svg width="14" height="12" viewBox="0 0 14 12"><path d="M13 6L9 2v2.500H2v3h7V10z" fill="none" stroke="currentColor" /></svg>
        </button>
        <button type="button" aria-label="布局" className="border border-[#7ab4ff]">
          <svg width="14" height="12" viewBox="0 0 14 12"><path d="M9.500 0v12M0 8.500h9M11 2.500h2M11 4.500h2M11 6.500h2M11 8.500h2" stroke="currentColor" /></svg>
        </button>
      </div>
    </div>
  );
}

const GREEN = 'text-[#00f000]';
const RED = 'text-[#ff3c3c]';
const YELLOW = 'text-[#ffff00]';
const WHITE = 'text-[#f0f0f0]';

const asks = [['卖五', 3520, 1540], ['卖四', 3519, 1564], ['卖三', 3518, 2117], ['卖二', 3517, 1127], ['卖一', 3516, 346]];
const bids = [['买一', 3515, 78], ['买二', 3514, 195], ['买三', 3513, 360], ['买四', 3512, 718], ['买五', 3511, 1177]];

function DepthTable({ rows, best }: { rows: (string | number)[][]; best: string }) {
  return (
    <table className="w-full table-fixed border-separate border-spacing-0 border-b border-[#c4140c] text-[14px] font-bold">
      <tbody>
        {rows.map(([label, price, qty]) => (
          <tr key={label} className={label === best ? 'h-[30px] text-[21px] leading-[30px]' : 'h-5 leading-5'}>
            <th scope="row" className="w-12 p-0 pl-[5px] text-left text-[14px] font-normal text-[#c8c8c8]">{label}</th>
            <td className={`w-16 p-0 text-right ${GREEN}`}>{price}</td>
            <td className={`p-0 pl-[15px] ${YELLOW}`}>{qty}</td>
          </tr>
        ))}
      </tbody>
    </table>
  );
}

const stats = [
  ['最新', '3515', GREEN, '结算', '3510', GREEN],
  ['涨跌', '-18', GREEN, '昨结', '3533', WHITE],
  ['幅度', '-0.51%', GREEN, '开盘', '3505', GREEN],
  ['总手', '1099757', YELLOW, '最高', '3522', GREEN],
  ['现手', '15', YELLOW, '最低', '3494', GREEN],
  ['涨停', '3709', RED, '跌停', '3356', GREEN],
  ['持仓', '2192582', YELLOW, '仓差', '8882', YELLOW],
  ['外盘', '567812', RED, '内盘', '531945', GREEN],
];

const trades: [string, number, number, string, string, 'r' | 'g'][] = [
  ['14:13', 3516, 504, '+105', '多开', 'r'],
  ['14:15', 3514, 523, '+227', '空开', 'g'],
  ['14:16', 3513, 978, '-499', '多平', 'g'],
  ['14:19', 3511, 577, '+265', '空开', 'g'],
  [':20', 3510, 859, '+245', '空开', 'g'],
  [':22', 3510, 1112, '+388', '空开', 'g'],
  ['14:22', 3512, 1081, '-737', '多平', 'g'],
  ['14:25', 3513, 501, '+226', '多开', 'r'],
  ['14:30', 3512, 945, '+711', '空开', 'g'],
  ['14:31', 3513, 765, '+513', '多开', 'r'],
  [':54', 3514, 678, '+393', '多开', 'r'],
  ['14:36', 3515, 677, '-131', '空平', 'r'],
  ['14:37', 3516, 620, '-41', '多平', 'g'],
  ['14:43', 3512, 593, '-205', '多平', 'g'],
  ['14:44', 3511, 517, '-191', '多平', 'g'],
  ['14:49', 3514, 532, '+219', '多开', 'r'],
  ['14:53', 3512, 504, '+128', '空开', 'g'],
  [':53', 3513, 504, '-313', '空平', 'r'],
  ['14:54', 3514, 1067, '-135', '空平', 'r'],
  ['14:55', 3514, 1094, '+168', '空开', 'g'],
  [':58', 3515, 504, '+212', '多开', 'r'],
  ['14:58', 3515, 548, '-351', '空平', 'r'],
  ['14:59', 3514, 511, '-92', '多平', 'g'],
];

function QuotePanel() {
  return (
    <aside className="flex w-[243px] shrink-0 flex-col border-r-2 border-l border-r-[#c8c4c0] border-l-[#c4140c]">
      <div className="relative h-6 shrink-0 border-b border-[#c4140c] pr-3 text-center font-['Liberation_Serif','Noto_Sans_CJK_SC',serif] text-[21px] leading-6 text-[#ffff00]">
        螺纹2410(rb2410)
        <button type="button" aria-label="还原" className="absolute top-px right-px border border-[#7ab4ff] text-[#7ab4ff]">
          <svg width="14" height="12" viewBox="0 0 14 12"><path d="M5.500 5V1.500h6v5H9M2.500 5.500h6v5h-6zM2 6.500h7M5 2.500h7" fill="none" stroke="currentColor" /></svg>
        </button>
      </div>
      <div className="flex h-[6px] shrink-0 border-b border-[#c4140c] px-px">
        <span className="w-[27%] bg-[#ff3232]" />
        <span className="flex-1 bg-[#00e600]" />
      </div>
      <DepthTable rows={asks} best="卖一" />
      <DepthTable rows={bids} best="买一" />
      <table className="w-full table-fixed border-separate border-spacing-0 border-b border-[#c4140c] text-[14px]">
        <tbody>
          {stats.map(([l1, v1, c1, l2, v2, c2]) => (
            <tr key={l1} className="h-5 leading-5">
              <th scope="row" className="w-12 p-0 pl-[5px] text-left font-normal text-[#c8c8c8]">{l1}</th>
              <td className={`w-16 p-0 text-right font-bold ${c1}`}>{v1}</td>
              <th scope="row" className="w-[43px] p-0 text-right font-normal text-[#c8c8c8]">{l2}</th>
              <td className={`p-0 pr-[6px] text-right font-bold ${c2}`}>{v2}</td>
            </tr>
          ))}
        </tbody>
      </table>
      <table className="w-full table-fixed text-right text-[14px] font-bold whitespace-nowrap">
        <thead>
          <tr className="h-[22px] leading-[22px] text-[#808080]">
            <th className="w-12 p-0 pl-[5px] text-left font-normal">北京</th>
            <th className="w-[59px] p-0 font-normal">价格</th>
            <th className="w-12 p-0 font-normal">√大单</th>
            <th className="w-12 p-0 font-normal">仓差</th>
            <th className="p-0 pr-px font-normal">性质</th>
          </tr>
        </thead>
        <tbody>
          {trades.map(([time, price, qty, delta, kind, tone], i) => (
            <tr key={i} className="h-[22px] leading-[22px]">
              <td className={`p-0 text-left ${WHITE} ${time.startsWith(':') ? 'pl-[23px] text-[11px] font-normal' : 'pl-[5px]'}`}>{time}</td>
              <td className={`p-0 ${GREEN}`}>{price}</td>
              <td className={`p-0 ${tone === 'r' ? RED : GREEN}`}>{qty}</td>
              <td className={`p-0 ${YELLOW}`}>{delta}</td>
              <td className={`p-0 pr-px font-normal ${tone === 'r' ? RED : GREEN}`}>{kind}</td>
            </tr>
          ))}
        </tbody>
      </table>
      <div className="mt-auto flex h-4 text-[13px] leading-[14px] text-[#e0e0e0]">
        <button type="button" className="w-[37px] rounded-b border-r border-b border-[#c4140c]">笔</button>
        <button type="button" className="w-9 rounded-tl border-t border-r border-[#c4140c]">权</button>
        <span className="flex-1 border-t border-[#c4140c]" />
      </div>
    </aside>
  );
}

export default function App() {
  return (
    <div className="flex h-screen flex-col overflow-hidden bg-black font-['Liberation_Sans','Noto_Sans_CJK_SC',sans-serif]">
      <MenuBar />
      <Toolbar />
      <div className="flex min-h-0 flex-1">
        <SideTabs />
        <main className="grid min-w-0 flex-1 grid-rows-[19px_561fr_149fr_225fr_15px]">
          <ChartHeader />
          <PricePanel />
          <VolumePanel />
          <MacdPanel />
          <TimeAxis />
        </main>
        <QuotePanel />
      </div>
    </div>
  );
}
